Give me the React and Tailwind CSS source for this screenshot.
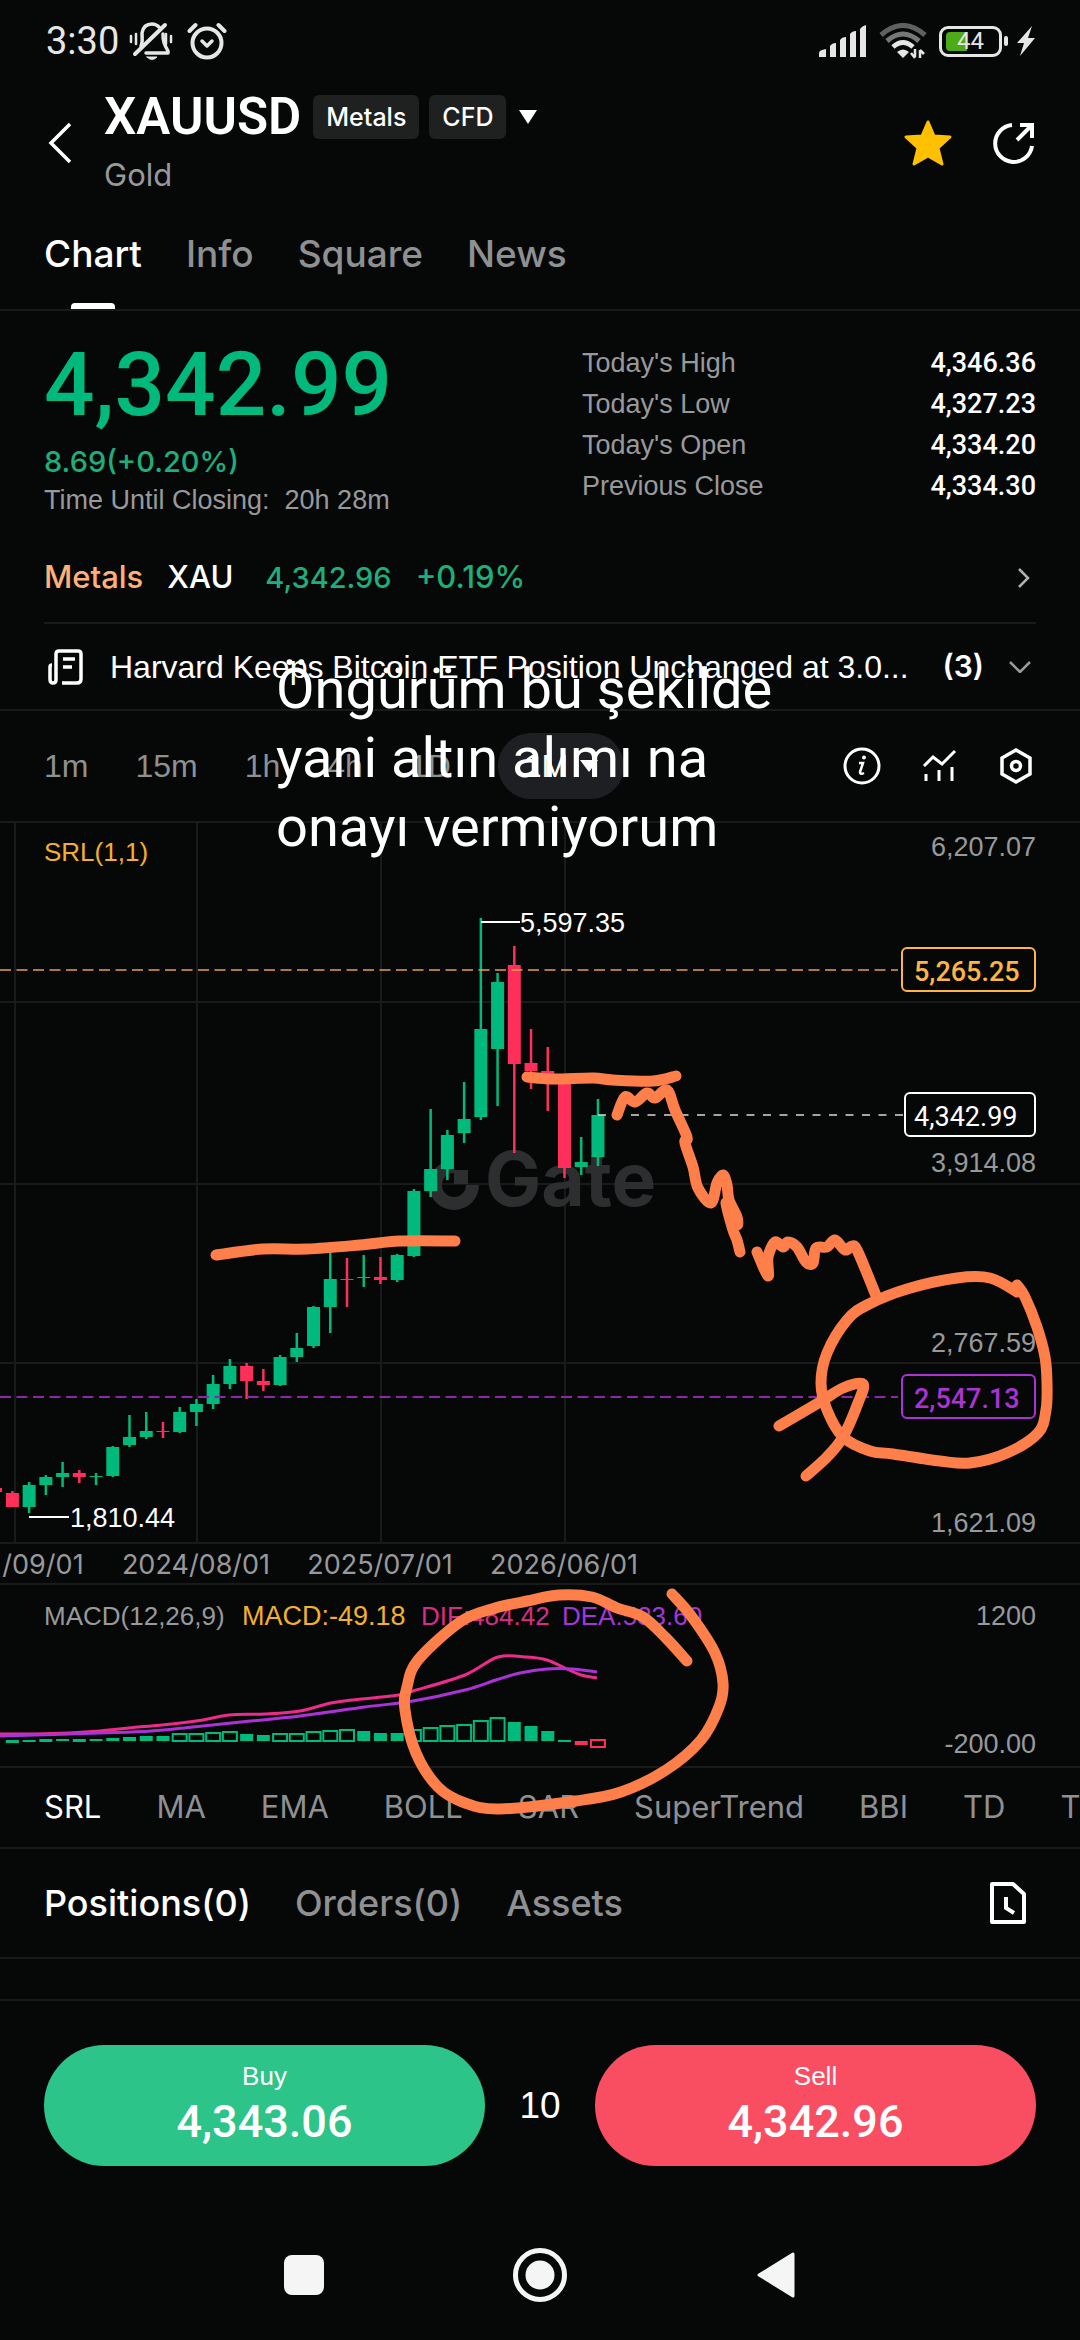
import { useState } from 'react';

const UP = '#00b97c';
const DOWN = '#ff2e5b';
const INK = '#ff7f4a';

const STEP = 16.73;
const candleX = (i) => 12.4 + STEP * i;

// direction, high, body top, body bottom, low
const candles = [
  ['d', 1491, 1493, 1507, 1507],
  ['u', 1482, 1485, 1507, 1513],
  ['u', 1475, 1477, 1485, 1495],
  ['u', 1462, 1473, 1477, 1487],
  ['d', 1470, 1473, 1477, 1483],
  ['u', 1473, 1476, 1477, 1485],
  ['u', 1446, 1447, 1476, 1477],
  ['u', 1415, 1437, 1445, 1447],
  ['u', 1412, 1431, 1437, 1439],
  ['d', 1422, 1431, 1432, 1438],
  ['u', 1407, 1412, 1432, 1433],
  ['u', 1399, 1404, 1412, 1426],
  ['u', 1375, 1384, 1404, 1409],
  ['u', 1359, 1366, 1384, 1389],
  ['d', 1363, 1366, 1381, 1399],
  ['d', 1369, 1381, 1385, 1391],
  ['u', 1355, 1357, 1385, 1386],
  ['u', 1333, 1348, 1357, 1362],
  ['u', 1306, 1307, 1346, 1348],
  ['u', 1250, 1279, 1307, 1333],
  ['d', 1258, 1279, 1280, 1307],
  ['u', 1255, 1277, 1278, 1287],
  ['d', 1257, 1277, 1280, 1284],
  ['u', 1254, 1255, 1280, 1282],
  ['u', 1189, 1191, 1256, 1257],
  ['u', 1109, 1169, 1191, 1197],
  ['u', 1130, 1135, 1169, 1180],
  ['u', 1082, 1119, 1133, 1143],
  ['u', 918, 1029, 1117, 1120],
  ['u', 973, 982, 1049, 1106],
  ['d', 946, 965, 1064, 1153],
  ['d', 1029, 1063, 1071, 1089],
  ['d', 1047, 1071, 1075, 1111],
  ['d', 1080, 1080, 1168, 1178],
  ['u', 1137, 1162, 1167, 1175],
  ['u', 1099, 1115, 1157, 1166],
];

// top, bottom, hollow, direction
const histogram = [
  [1740, 1743], [1740, 1742], [1739, 1742], [1739, 1741], [1739, 1742], [1739, 1741],
  [1738, 1741], [1737, 1741], [1736, 1741], [1736, 1741],
  [1734, 1742, true], [1734, 1742, true], [1733, 1742, true], [1732, 1742, true],
  [1734, 1741], [1735, 1741],
  [1734, 1742, true], [1734, 1742, true], [1732, 1742, true], [1731, 1742, true], [1730, 1742, true],
  [1731, 1741], [1733, 1741], [1733, 1741],
  [1730, 1742, true], [1728, 1742, true], [1726, 1742, true], [1725, 1742, true], [1721, 1742, true], [1718, 1742, true],
  [1722, 1741], [1726, 1741], [1731, 1741], [1740, 1742],
  [1741, 1745, false, 'd'], [1740, 1748, true, 'd'],
];

const dif = [[0, 1734], [34, 1734], [69, 1733], [100, 1731], [138, 1727], [172, 1724], [203, 1720], [229, 1715], [265, 1714], [300, 1711], [331, 1703], [362, 1699], [382, 1697], [399, 1695], [413, 1691], [465, 1675], [498, 1657], [527, 1657], [547, 1660], [567, 1669], [581, 1675], [597, 1678]];
const dea = [[0, 1736], [100, 1733], [151, 1731], [193, 1727], [241, 1722], [300, 1716], [365, 1707], [413, 1701], [465, 1690], [496, 1680], [520, 1673], [547, 1669], [572, 1669], [597, 1672]];

const inkStrokes = [
  [[216, 1255], [263, 1249], [307, 1249], [360, 1245], [400, 1241], [455, 1241]],
  [[527, 1077], [553, 1079], [593, 1078], [613, 1080], [653, 1081], [676, 1076]],
  [[617, 1115], [625, 1097], [635, 1102], [647, 1093], [655, 1098], [667, 1090], [675, 1110], [687, 1137], [685, 1143], [693, 1167], [698, 1188], [711, 1203], [717, 1183], [723, 1175], [727, 1185], [729, 1200], [737, 1217], [737, 1225], [731, 1215], [726, 1203], [733, 1230], [737, 1240], [740, 1252]],
  [[757, 1252], [768, 1276], [768, 1257], [775, 1242], [783, 1247], [788, 1242], [797, 1247], [806, 1262], [813, 1263], [816, 1248], [827, 1247], [835, 1240], [845, 1250], [852, 1246], [858, 1252], [877, 1298]],
  [[1017, 1285], [1025, 1297], [1037, 1327], [1045, 1357], [1047, 1383], [1046, 1410], [1038, 1433], [1007, 1453], [970, 1463], [940, 1461], [893, 1454], [870, 1451], [843, 1437], [827, 1410], [821, 1383], [827, 1353], [847, 1320], [867, 1305], [907, 1289], [957, 1278], [990, 1278], [1017, 1292]],
  [[779, 1426], [820, 1402], [843, 1388], [863, 1384], [858, 1403], [843, 1437], [827, 1457], [806, 1476]],
  [[672, 1594], [692, 1617], [715, 1653], [723, 1683], [719, 1707], [701, 1740], [666, 1770], [621, 1792], [576, 1801], [500, 1809], [465, 1803], [438, 1787], [416, 1753], [405, 1710], [407, 1687], [418, 1660], [460, 1622], [492, 1609], [527, 1601], [559, 1595], [592, 1597], [617, 1608], [643, 1617], [666, 1638], [687, 1661]],
];

// Catmull-Rom spline through the points, as cubic beziers
function smooth(pts) {
  let d = `M${pts[0][0]} ${pts[0][1]}`;
  for (let i = 0; i < pts.length - 1; i++) {
    const p0 = pts[i - 1] || pts[i];
    const p1 = pts[i];
    const p2 = pts[i + 1];
    const p3 = pts[i + 2] || p2;
    d += `C${p1[0] + (p2[0] - p0[0]) / 6} ${p1[1] + (p2[1] - p0[1]) / 6} ${p2[0] - (p3[0] - p1[0]) / 6} ${p2[1] - (p3[1] - p1[1]) / 6} ${p2[0]} ${p2[1]}`;
  }
  return d;
}

function StatusBar() {
  return (
    <div className="flex h-20 items-center justify-between pt-0.5 pl-[46px] pr-11 text-[#e6e6e6]">
      <div className="flex items-center">
        <span className="font-['Roboto',sans-serif] text-[38px] leading-10">3:30</span>
        <svg className="ml-2.5 h-10 w-11" viewBox="0 0 44 40" fill="none" stroke="currentColor" strokeWidth="3.500" strokeLinecap="round">
          <path d="M12 25c2-4 1-8 1-13 1-6 5-9 10-9 3 0 5 1 7 3M34 13c0 7 1 10 5 17v2H17" strokeLinejoin="round" />
          <path d="M36 4L6 33" strokeWidth="4" />
          <path d="M2 15v6M7 13v10M37 13v10M42 15v6" strokeWidth="2.500" />
          <path d="M18 36h10q-5 5-10 0z" fill="currentColor" strokeWidth="1" />
        </svg>
        <svg className="ml-3.5 h-10 w-10" viewBox="0 0 40 40" fill="none" stroke="currentColor" strokeLinecap="round">
          <circle cx="20" cy="22" r="14.5" strokeWidth="4" />
          <path d="M2.500 10l6-6M37.500 10l-6-6" strokeWidth="4" />
          <path d="M15 20l5 5 5-5" strokeWidth="3.500" strokeLinejoin="round" />
        </svg>
      </div>
      <div className="flex items-center">
        <svg className="h-8 w-12" viewBox="0 0 48 32" fill="currentColor">
          <path d="M0 32v-4q0-3 7-4v8zM11 32V21q2-3 6-3v14zM21 32V15q2-3 6-3v20zM31 32V9q2-3 6-3v26zM41 32V4q2-3 6-4v32z" />
        </svg>
        <svg className="ml-3 h-9 w-12" viewBox="0 0 48 36" fill="none" stroke="currentColor" strokeWidth="5">
          <path d="M2 12Q24-7 46 12" opacity=".4" />
          <path d="M8 18Q24 4 40 18" opacity=".5" />
          <path d="M14 24q10-9 20 0" />
          <path d="M18 29q6-5 12 0l-6 6z" fill="currentColor" stroke="none" />
          <path d="M36 26v8m-4-4l4 5M41 35v-8m0 0l4 4" strokeWidth="2.500" />
        </svg>
        <div className="ml-3 flex items-center">
          <span className="relative flex h-[31px] w-[63px] items-center justify-center rounded-[9px] border-[3px] border-[#e6e6e6]">
            <span className="absolute left-1 h-[19px] w-[21px] rounded-l-sm bg-[#4cab17]" />
            <span className="relative font-['Roboto',sans-serif] text-[24px] leading-6">44</span>
          </span>
          <span className="ml-0.5 h-2.5 w-1 rounded-sm bg-[#e6e6e6]" />
        </div>
        <svg className="ml-2 h-[30px] w-5" viewBox="0 0 20 30" fill="currentColor">
          <path d="M16 0L1 17h7L4 30 19 12h-7z" />
        </svg>
      </div>
    </div>
  );
}

function Header() {
  return (
    <header className="flex h-[122px] items-center pt-2 pl-12 pr-11">
      <button aria-label="Back" className="mr-8 mb-1">
        <svg className="h-11 w-6" viewBox="0 0 24 44" fill="none" stroke="currentColor" strokeWidth="3.500">
          <path d="M22 3L3 22l19 19" />
        </svg>
      </button>
      <div className="flex-1">
        <div className="flex items-center">
          <h1 className="font-['Roboto',sans-serif] text-[51px] font-semibold leading-[60px]">XAUUSD</h1>
          <span className="ml-3 rounded-md bg-[#1f2121] px-[13px] font-['Inter',sans-serif] text-[25px] font-medium leading-[44px]">Metals</span>
          <span className="ml-2.5 rounded-md bg-[#1f2121] px-[13px] font-['Inter',sans-serif] text-[25px] font-medium leading-[44px]">CFD</span>
          <button aria-label="Switch market" className="ml-3">
            <svg className="h-3.5 w-5" viewBox="0 0 20 14" fill="currentColor"><path d="M1 0h18L10 14z" /></svg>
          </button>
        </div>
        <p className="font-['Inter',sans-serif] text-[31px] leading-[56px] text-[#98999b]">Gold</p>
      </div>
      <button aria-label="Favorite" className="mr-10 mb-1">
        <svg className="h-12 w-12" viewBox="0 0 48 48" fill="#ffc000" stroke="#ffc000" strokeWidth="3" strokeLinejoin="round">
          <path d="M24 3l6 14 16 1-12 11 4 16-14-8-14 8 4-16L2 18l16-1z" />
        </svg>
      </button>
      <button aria-label="Share" className="mb-1">
        <svg className="h-11 w-11" viewBox="0 0 44 44" fill="none" stroke="currentColor" strokeWidth="4">
          <path d="M20 4A18.500 18.500 0 1 0 40 25" />
          <path d="M25 19L39 5M28 4h12v13" />
        </svg>
      </button>
    </header>
  );
}

function PageTabs() {
  const [active, setActive] = useState('Chart');
  return (
    <nav className="flex h-[109px] gap-11 border-b-2 border-[#191b1b] px-11 font-['Inter',sans-serif] text-[37px] font-medium leading-[48px]">
      {['Chart', 'Info', 'Square', 'News'].map((t) => (
        <button
          key={t}
          onClick={() => setActive(t)}
          className={`flex flex-col items-center justify-between pt-7 ${active === t ? 'text-white' : 'text-[#8f9092]'}`}
        >
          {t}
          {active === t && <span className="h-1.5 w-11 rounded-t-sm bg-white" />}
        </button>
      ))}
    </nav>
  );
}

const stats = [
  ["Today's High", '4,346.36'],
  ["Today's Low", '4,327.23'],
  ["Today's Open", '4,334.20'],
  ['Previous Close', '4,334.30'],
];

function Quote() {
  return (
    <section className="flex justify-between px-11 pt-8 pb-3">
      <div>
        <p className="font-['Roboto',sans-serif] text-[89px] font-medium leading-[84px] text-[#00b97c]">4,342.99</p>
        <p className="mt-4 font-['Inter',sans-serif] text-[29px] font-medium leading-[38px] text-[#1fae7b]">8.69(+0.20%)</p>
        <p className="text-[27px] leading-[38px] text-[#98999b]">Time Until Closing:&nbsp; 20h 28m</p>
      </div>
      <dl className="w-[454px] text-[27px] leading-[41px]">
        {stats.map(([k, v]) => (
          <div key={k} className="flex justify-between">
            <dt className="text-[#98999b]">{k}</dt>
            <dd className="font-['Roboto',sans-serif] font-medium">{v}</dd>
          </div>
        ))}
      </dl>
    </section>
  );
}

function RelatedMarket() {
  return (
    <a href="#xau" className="mx-11 flex h-[93px] items-center border-b-2 border-[#191b1b] pt-0.5 font-['Inter',sans-serif] text-[31px] font-medium">
      <span className="text-[#ffb078]">Metals</span>
      <span className="ml-6">XAU</span>
      <span className="ml-8 text-[29px] text-[#1fae7b]">4,342.96</span>
      <span className="ml-6 text-[31px] text-[#1fae7b]">+0.19%</span>
      <svg className="ml-auto mr-1.5 h-5 w-3" viewBox="0 0 12 20" fill="none" stroke="#b0b0b0" strokeWidth="2.500"><path d="M1 1l9 9-9 9" /></svg>
    </a>
  );
}

function NewsLine() {
  return (
    <div className="flex h-[87px] items-center border-b-2 border-[#191b1b] px-11 text-[32px]">
      <svg className="ml-1 h-9 w-9 shrink-0" viewBox="0 0 36 36" fill="none" stroke="currentColor" strokeWidth="3.500" strokeLinejoin="round">
        <path d="M8 31V5q0-3 3-3h19q3 0 3 3v25q0 4-4 4H14" />
        <path d="M8 31q0 3-3 3-3 0-3-4V18q0-2 2-2" />
        <path d="M15 10h12M15 18h9" />
      </svg>
      <a href="#news" className="ml-[26px] min-w-0 flex-1 whitespace-nowrap">Harvard Keeps Bitcoin ETF Position Unchanged at 3.0...</a>
      <span className="ml-6 font-['Inter',sans-serif] text-[30px] font-semibold">(3)</span>
      <button aria-label="Show more news" className="ml-6 mr-1">
        <svg className="h-3 w-6" viewBox="0 0 24 12" fill="none" stroke="#9a9a9a" strokeWidth="2.500"><path d="M2 1l10 10L22 1" /></svg>
      </button>
    </div>
  );
}

function IntervalBar() {
  return (
    <div className="flex h-[112px] items-center justify-between border-b-2 border-[#191b1b] px-11 text-[32px] text-[#8f9092]">
      <div className="flex items-center gap-[47px]">
        <button>1m</button>
        <button>15m</button>
        <button>1h</button>
        <button>4h</button>
        <button>1D</button>
        <button className="flex h-[66px] items-center gap-3 rounded-full bg-[#1e1f23] px-[26px] text-white">
          1M
          <svg className="h-3 w-[18px]" viewBox="0 0 18 12" fill="currentColor"><path d="M0 0h18l-9 12z" /></svg>
        </button>
      </div>
      <div className="flex items-center gap-[39px] text-white">
        <button aria-label="Information">
          <svg className="h-10 w-10" viewBox="0 0 40 40" fill="none" stroke="currentColor" strokeWidth="3">
            <circle cx="20" cy="20" r="17" />
            <path d="M17 17h4l-3 9q0 3 4 1" strokeWidth="2.500" />
            <circle cx="22" cy="11.500" r="2" fill="currentColor" stroke="none" />
          </svg>
        </button>
        <button aria-label="Indicators">
          <svg className="h-9 w-9" viewBox="0 0 36 36" fill="none" stroke="currentColor" strokeWidth="3">
            <path d="M3 18l9-9 9 7L34 3M5 26v7M18 22v11M31 19v14" />
          </svg>
        </button>
        <button aria-label="Chart settings">
          <svg className="h-10 w-10" viewBox="0 0 40 40" fill="none" stroke="currentColor" strokeWidth="3.500">
            <path d="M20 4l14 8v16l-14 8-14-8V12z" />
            <circle cx="20" cy="20" r="4.500" />
          </svg>
        </button>
      </div>
    </div>
  );
}

function PriceTag({ y, color, text, left = 902, weight = 500 }) {
  return (
    <g>
      <rect x={left} y={y - 22} width={1035 - left} height="43" rx="5" fill="#060808" stroke={color} strokeWidth="2" />
      <text x="914" y={y + 11} fill={color} className="font-['Roboto',sans-serif]" fontWeight={weight}>{text}</text>
    </g>
  );
}

function PriceChart() {
  return (
    <svg className="block w-full" viewBox="0 823 1080 762" fontSize="27" fill="#98999b">
      <g stroke="#191b1b" strokeWidth="2">
        {[1002, 1184, 1363, 1543, 1584].map((y) => <path key={y} d={`M0 ${y}H1080`} />)}
        {[15, 197, 381, 565].map((x) => <path key={x} d={`M${x} 823V1543`} />)}
      </g>

      <g fill="#2d2e30">
        <path d="M454 1160a25 25 0 1 0 25 25h-13a12 12 0 1 1-12-12z" />
        <rect x="454" y="1170" width="14" height="14" />
        <text x="485" y="1206" className="font-['Inter',sans-serif]" fontSize="75" fontWeight="700">Gate</text>
      </g>

      <path d="M0 1490h2" stroke={DOWN} strokeWidth="4" />
      {candles.map(([dir, high, top, bottom, low], i) => (
        <g key={i} fill={dir === 'u' ? UP : DOWN}>
          <rect x={candleX(i) - 1.25} y={high} width="2.5" height={low - high} />
          <rect x={candleX(i) - 6.5} y={top} width="13" height={bottom - top} />
        </g>
      ))}

      <path d="M0 970H898" stroke="#e5a04a" strokeWidth="1.5" strokeDasharray="11 5.5" />
      <path d="M598 1115H903" stroke="#d8d8d8" strokeWidth="1.500" strokeDasharray="8 8.5" />
      <path d="M0 1397H898" stroke="#8c27ad" strokeWidth="2" strokeDasharray="11 5.5" />

      <text x="44" y="861" fill="#f2b02e" fontSize="26">SRL(1,1)</text>
      <g textAnchor="end">
        <text x="1036" y="856">6,207.07</text>
        <text x="1036" y="1172">3,914.08</text>
        <text x="1036" y="1352">2,767.59</text>
        <text x="1036" y="1532">1,621.09</text>
      </g>
      <PriceTag y={970} color="#ffb545" text="5,265.25" />
      <PriceTag y={1115} color="#ffffff" text="4,342.99" left={905} weight={400} />
      <PriceTag y={1397} color="#ab33d6" text="2,547.13" />

      <g fill="#fff" stroke="none">
        <path d="M481 922H520M29 1517H69" stroke="#fff" strokeWidth="2" />
        <text x="520" y="932">5,597.35</text>
        <text x="70" y="1527">1,810.44</text>
      </g>

      <g textAnchor="middle" className="font-['Inter',sans-serif]" fontSize="27">
        <text x="43" y="1574">/09/01</text>
        <text x="196" y="1574">2024/08/01</text>
        <text x="380" y="1574">2025/07/01</text>
        <text x="564" y="1574">2026/06/01</text>
      </g>
    </svg>
  );
}

function MacdChart() {
  return (
    <svg className="block w-full" viewBox="0 1585 1080 183" fontSize="26" fill="#98999b">
      <text x="44" y="1625">MACD(12,26,9)</text>
      <text x="242" y="1625" fontSize="27" fill="#f2b02e">MACD:-49.18</text>
      <text x="421" y="1625" fill="#d92c84">DIF:484.42</text>
      <text x="562" y="1625" fill="#a436d8">DEA:533.60</text>
      <text x="1036" y="1625" fontSize="27" textAnchor="end">1200</text>
      <text x="1036" y="1753" fontSize="27" textAnchor="end">-200.00</text>
      {histogram.map(([top, bottom, hollow, dir], i) => {
        const color = dir === 'd' ? DOWN : UP;
        return hollow ? (
          <rect key={i} x={candleX(i) - 7} y={top} width="14" height={bottom - top - 1} fill="none" stroke={color} strokeWidth="2" />
        ) : (
          <rect key={i} x={candleX(i) - 6.5} y={top} width="13" height={bottom - top} fill={color} />
        );
      })}
      <g fill="none" strokeWidth="3">
        <path d={smooth(dif)} stroke="#ec2c8b" />
        <path d={smooth(dea)} stroke="#ab33d6" />
      </g>
      <path d="M0 1767H1080" stroke="#191b1b" strokeWidth="2" />
    </svg>
  );
}

function IndicatorTabs() {
  return (
    <nav className="flex h-[81px] items-center gap-[55px] overflow-hidden border-b-2 border-[#191b1b] pl-11 font-['Inter',sans-serif] text-[31px] text-[#8f9092]">
      {['SRL', 'MA', 'EMA', 'BOLL', 'SAR', 'SuperTrend', 'BBI', 'TD', 'TRIX'].map((name, i) => (
        <button key={name} className={i === 0 ? 'text-white' : ''}>{name}</button>
      ))}
    </nav>
  );
}

function PositionTabs() {
  return (
    <nav className="flex h-[110px] items-center gap-11 border-b-2 border-[#191b1b] px-11 font-['Inter',sans-serif] text-[36px] font-medium text-[#8f9092]">
      <button className="text-white">Positions(0)</button>
      <button>Orders(0)</button>
      <button>Assets</button>
      <button aria-label="Order history" className="ml-auto mr-2 text-white">
        <svg className="h-11 w-10" viewBox="0 0 40 44" fill="none" stroke="currentColor" strokeWidth="4">
          <path d="M4 3h21l11 10v28H4z" strokeLinejoin="round" />
          <path d="M18 16v11l8 5" />
        </svg>
      </button>
    </nav>
  );
}

function TradeBar() {
  return (
    <div className="flex items-center border-t-2 border-[#191b1b] px-11 pt-11">
      <button className="flex h-[121px] flex-1 flex-col items-center justify-center rounded-full bg-[#2cc488]">
        <span className="text-[26px] leading-8">Buy</span>
        <span className="font-['Roboto',sans-serif] text-[45px] font-medium leading-[60px]">4,343.06</span>
      </button>
      <span className="w-[110px] text-center text-[37px]">10</span>
      <button className="flex h-[121px] flex-1 flex-col items-center justify-center rounded-full bg-[#f94d61]">
        <span className="text-[26px] leading-8">Sell</span>
        <span className="font-['Roboto',sans-serif] text-[45px] font-medium leading-[60px]">4,342.96</span>
      </button>
    </div>
  );
}

function SystemNav() {
  return (
    <div className="flex h-[174px] items-center justify-center gap-[188px] pt-11 text-[#f5f5f5]">
      <button aria-label="Recent apps" className="h-10 w-10 rounded-lg bg-[#f5f5f5]" />
      <button aria-label="Home">
        <svg className="h-14 w-14" viewBox="0 0 56 56" fill="none" stroke="currentColor">
          <circle cx="28" cy="28" r="24.500" strokeWidth="5" />
          <circle cx="28" cy="28" r="14.500" fill="currentColor" stroke="none" />
        </svg>
      </button>
      <button aria-label="Go back">
        <svg className="h-12 w-10" viewBox="0 0 40 48" fill="currentColor" stroke="currentColor" strokeWidth="3" strokeLinejoin="round">
          <path d="M3 24L37 3v42z" />
        </svg>
      </button>
    </div>
  );
}

function Annotations() {
  return (
    <div className="pointer-events-none absolute inset-0">
      <svg className="absolute top-0 left-0 w-full" viewBox="0 0 1080 2340" fill="none" stroke={INK} strokeWidth="11" strokeLinecap="round" strokeLinejoin="round">
        {inkStrokes.map((pts, i) => <path key={i} d={smooth(pts)} />)}
      </svg>
      <p className="absolute top-[655px] left-[276px] font-['Roboto',sans-serif] text-[56px] leading-[69px] whitespace-nowrap">
        Öngürüm bu şekilde<br />
        yani altın alımı na<br />
        onayı vermiyorum
      </p>
    </div>
  );
}

export default function App() {
  return (
    <main className="relative min-h-screen overflow-hidden bg-[#060808] font-['Liberation_Sans',Arial,sans-serif] text-white">
      <StatusBar />
      <Header />
      <PageTabs />
      <Quote />
      <RelatedMarket />
      <NewsLine />
      <IntervalBar />
      <PriceChart />
      <MacdChart />
      <IndicatorTabs />
      <PositionTabs />
      <div className="h-10" />
      <TradeBar />
      <SystemNav />
      <Annotations />
    </main>
  );
}
